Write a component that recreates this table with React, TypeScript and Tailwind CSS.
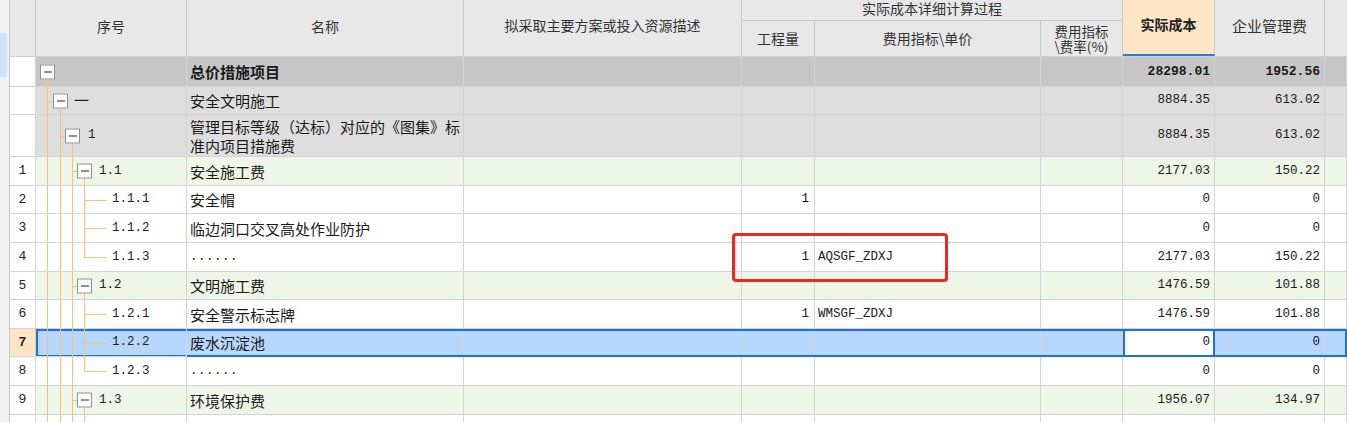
import React from "react";

type Tree = {
  through: number[];
  box?: number;
  h?: [number, number];
  down?: number;
  up?: number;
  label: string;
  pad: number;
  cjk?: boolean;
};

type RowData = {
  num: string;
  h: string;
  kind: "root" | "gray" | "green" | "white" | "sel";
  tree: Tree;
  name: string;
  mono?: boolean;
  qty?: string;
  price?: string;
  cost: string;
  fee: string;
};

const leaf = (label: string, last = false): Tree =>
  last
    ? { through: [11, 24, 36], up: 48, h: [48, 70], label, pad: 76 }
    : { through: [11, 24, 36, 48], h: [48, 70], label, pad: 76 };

const branch = (label: string): Tree => ({
  through: [11, 24, 36],
  box: 41,
  h: [36, 41],
  down: 48,
  label,
  pad: 63,
});

const rows: RowData[] = [
  { num: "", h: "h-[30px]", kind: "root", tree: { through: [], box: 4, down: 11, label: "", pad: 24 }, name: "总价措施项目", cost: "28298.01", fee: "1952.56" },
  { num: "", h: "h-[28px]", kind: "gray", tree: { through: [11], box: 17, h: [11, 17], down: 24, label: "一", pad: 38, cjk: true }, name: "安全文明施工", cost: "8884.35", fee: "613.02" },
  { num: "", h: "h-[42px]", kind: "gray", tree: { through: [11, 24], box: 29, h: [24, 29], down: 36, label: "1", pad: 52 }, name: "管理目标等级（达标）对应的《图集》标准内项目措施费", cost: "8884.35", fee: "613.02" },
  { num: "1", h: "h-[29px]", kind: "green", tree: branch("1.1"), name: "安全施工费", cost: "2177.03", fee: "150.22" },
  { num: "2", h: "h-[28px]", kind: "white", tree: leaf("1.1.1"), name: "安全帽", qty: "1", cost: "0", fee: "0" },
  { num: "3", h: "h-[29px]", kind: "white", tree: leaf("1.1.2"), name: "临边洞口交叉高处作业防护", cost: "0", fee: "0" },
  { num: "4", h: "h-[29px]", kind: "white", tree: leaf("1.1.3", true), name: "......", mono: true, qty: "1", price: "AQSGF_ZDXJ", cost: "2177.03", fee: "150.22" },
  { num: "5", h: "h-[28px]", kind: "green", tree: branch("1.2"), name: "文明施工费", cost: "1476.59", fee: "101.88" },
  { num: "6", h: "h-[29px]", kind: "white", tree: leaf("1.2.1"), name: "安全警示标志牌", qty: "1", price: "WMSGF_ZDXJ", cost: "1476.59", fee: "101.88" },
  { num: "7", h: "h-[28px]", kind: "sel", tree: leaf("1.2.2"), name: "废水沉淀池", cost: "0", fee: "0" },
  { num: "8", h: "h-[29px]", kind: "white", tree: leaf("1.2.3", true), name: "......", mono: true, cost: "0", fee: "0" },
  { num: "9", h: "h-[29px]", kind: "green", tree: branch("1.3"), name: "环境保护费", cost: "1956.07", fee: "134.97" },
  { num: "10", h: "h-[29px]", kind: "white", tree: leaf("1.3.1"), name: "扬尘污染控制措施", cost: "0", fee: "0" },
];

const bgOf = {
  root: "bg-[#c6c6c6]",
  gray: "bg-[#dedede]",
  green: "bg-[#eef6e8]",
  white: "bg-white",
  sel: "bg-[#b6d6fc]",
};

const cjk = "font-['Noto_Sans_CJK_SC',sans-serif]";
const mono = "font-['Liberation_Mono','Noto_Sans_CJK_SC',monospace]";
const cell = "shrink-0 border-r border-b border-[#d3d3d3] flex items-center";

function TreeCell({ t }: { t: Tree }) {
  return (
    <div className={`${cell} relative w-[151px]`} style={{ paddingLeft: t.pad }}>
      {t.through.map((x) => (
        <span key={x} className="absolute top-0 -bottom-px w-px bg-[#f8c07a]" style={{ left: x }} />
      ))}
      {t.h && (
        <span className="absolute top-1/2 h-px bg-[#f8c07a]" style={{ left: t.h[0], width: t.h[1] - t.h[0] }} />
      )}
      {t.down !== undefined && (
        <span className="absolute top-1/2 -bottom-px w-px bg-[#f8c07a]" style={{ left: t.down }} />
      )}
      {t.up !== undefined && (
        <span className="absolute top-0 h-1/2 w-px bg-[#f8c07a]" style={{ left: t.up }} />
      )}
      {t.box !== undefined && (
        <span
          className="absolute top-1/2 -translate-y-1/2 w-[15px] h-[15px] border border-[#8e8e8e] bg-white flex items-center justify-center"
          style={{ left: t.box }}
        >
          <span className="w-[8px] h-px bg-[#222]" />
        </span>
      )}
      <span className={`relative ${t.cjk ? `${cjk} text-[15px]` : `${mono} text-[12.5px]`} text-[#222]`}>{t.label}</span>
    </div>
  );
}

function Row({ r }: { r: RowData }) {
  const sel = r.kind === "sel";
  const bold = r.kind === "root";
  return (
    <div className={`flex shrink-0 ${r.h}`}>
      <div
        className={`${cell} w-[26px] justify-center ${mono} text-[13px] text-[#222] ${
          sel ? "bg-[#fde4c4] font-bold" : "bg-white"
        }`}
      >
        {r.num}
      </div>
      <div
        className={`flex flex-1 ${bgOf[r.kind]} ${
          sel ? "relative z-10 outline-2 outline-[#1d6fe6] -outline-offset-2" : ""
        }`}
      >
        <TreeCell t={r.tree} />
        <div
          className={`${cell} w-[277px] pl-[3px] leading-[19px] text-[#1a1a1a] ${
            r.mono ? `${mono} text-[12.5px] tracking-[0.5px]` : `${cjk} text-[15px]`
          } ${bold ? "font-bold" : ""}`}
        >
          {r.name}
        </div>
        <div className={`${cell} w-[278px]`} />
        <div className={`${cell} w-[73px] justify-end pr-[5px] ${mono} text-[12.5px] text-[#1a1a1a]`}>{r.qty}</div>
        <div className={`${cell} w-[226px] pl-[3px] ${mono} text-[12.5px] text-[#1a1a1a]`}>{r.price}</div>
        <div className={`${cell} w-[82px]`} />
        <div
          className={`${cell} w-[92px] justify-end pr-[4px] ${mono} text-[#1a1a1a] ${
            bold ? "font-bold text-[13px]" : "text-[12.5px]"
          } ${sel ? "relative bg-white outline-2 outline-[#1d6fe6] -outline-offset-2" : ""}`}
        >
          {r.cost}
        </div>
        <div
          className={`${cell} w-[110px] justify-end pr-[4px] ${mono} text-[#1a1a1a] ${
            bold ? "font-bold text-[13px]" : "text-[12.5px]"
          }`}
        >
          {r.fee}
        </div>
        <div className={`${cell} flex-1`} />
      </div>
    </div>
  );
}

function Header() {
  const hc = "shrink-0 border-r border-[#c9c9c9] flex items-center justify-center";
  return (
    <div className={`flex shrink-0 h-[57px] bg-[#e8e8e8] border-b border-[#cfcfcf] text-[14px] text-[#333] ${cjk}`}>
      <div className={`${hc} w-[26px]`} />
      <div className={`${hc} w-[151px] pb-[4px]`}>序号</div>
      <div className={`${hc} w-[277px] pb-[4px]`}>名称</div>
      <div className={`${hc} w-[278px] pb-[6px]`}>拟采取主要方案或投入资源描述</div>
      <div className="shrink-0 w-[381px] border-r border-[#c9c9c9] flex flex-col">
        <div className="h-[21px] shrink-0 border-b border-[#c9c9c9] flex items-center justify-center pb-[4px]">
          实际成本详细计算过程
        </div>
        <div className="flex flex-1">
          <div className={`${hc} w-[73px]`}>工程量</div>
          <div className={`${hc} w-[226px]`}>{"费用指标\\单价"}</div>
          <div className="flex-1 flex flex-col items-center justify-center leading-[15px] text-center text-[13.5px]">
            <span>费用指标</span>
            <span>{"\\费率(%)"}</span>
          </div>
        </div>
      </div>
      <div className={`${hc} w-[92px] bg-[#fde5c6] border-b-2 border-b-[#2a78e0] font-bold text-[#222] pb-[6px]`}>
        实际成本
      </div>
      <div className={`${hc} w-[110px] pb-[4px] text-[15px]`}>企业管理费</div>
      <div className="flex-1" />
    </div>
  );
}

export default function App() {
  return (
    <div className="relative w-[1347px] h-[422px] overflow-hidden bg-white flex">
      <div className="w-[10px] shrink-0 bg-[#f1f1f1] border-r border-[#c6c6c6]">
        <div className="mt-[33px] h-[44px] w-[7px] bg-[#cde5fb]" />
      </div>
      <div className="flex-1 flex flex-col">
        <Header />
        {rows.map((r, i) => (
          <Row key={i} r={r} />
        ))}
      </div>
      <div className="absolute left-[732px] top-[233px] w-[216px] h-[49px] border-[3px] border-[#f4241e] rounded-[4px] z-20" />
    </div>
  );
}
